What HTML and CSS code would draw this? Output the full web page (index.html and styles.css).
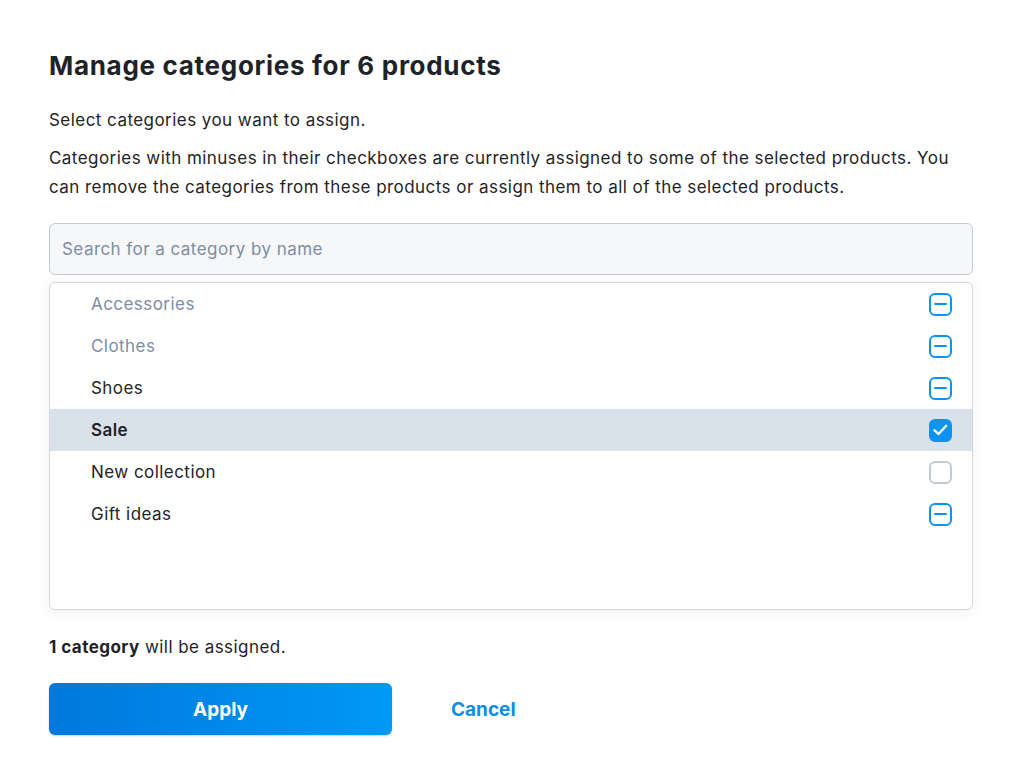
FILE: index.html
```html
<!DOCTYPE html>
<html lang="en">
<head>
  <meta charset="UTF-8" />
  <meta name="viewport" content="width=device-width, initial-scale=1.0"/>
  <title>Manage categories</title>
  <link rel="stylesheet" href="styles.css">
</head>
<body>
  <div class="dialog">
    <h1>Manage categories for 6 products</h1>

    <p>Select categories you want to assign.</p>
    <p>Categories with minuses in their checkboxes are currently assigned to some of the selected products. You can remove the categories from these products or assign them to all of the selected products.</p>

    <input class="search" type="text" placeholder="Search for a category by name">

    <ul class="cat-list">
      <li class="muted"><span>Accessories</span><span class="box partial"></span></li>
      <li class="muted"><span>Clothes</span><span class="box partial"></span></li>
      <li><span>Shoes</span><span class="box partial"></span></li>
      <li class="selected"><span>Sale</span>
        <span class="box checked">
          <svg width="15" height="12" viewBox="0 0 15 12"><path d="M1.6 6.3 L5.5 10 L13.2 1.8" fill="none" stroke="#fff" stroke-width="2.4" stroke-linecap="round" stroke-linejoin="round"/></svg>
        </span>
      </li>
      <li><span>New collection</span><span class="box"></span></li>
      <li><span>Gift ideas</span><span class="box partial"></span></li>
    </ul>

    <p class="summary"><b>1 category</b> will be assigned.</p>

    <div class="actions">
      <button class="apply">Apply</button>
      <button class="cancel">Cancel</button>
    </div>
  </div>
</body>
</html>
```

FILE: styles.css
```css
body {
  margin: 0;
  background-color: #ffffff;
  font-family: Inter, "Open Sans", sans-serif;
  color: #1f2328;
}

.dialog {
  padding: 50px 51px 30px 49px;
}

h1 {
  margin: 0 0 24px;
  font-size: 26px;
  line-height: 32px;
  font-weight: 700;
  letter-spacing: 0.7px;
  color: #1e2329;
}

p {
  margin: 0 0 9px;
  font-size: 17px;
  line-height: 29px;
  letter-spacing: 0.45px;
}

.search {
  display: block;
  box-sizing: border-box;
  width: 100%;
  height: 52px;
  margin-top: 21px;
  padding: 0 12px;
  border: 1px solid #c5cbd3;
  border-radius: 6px;
  background-color: #f6f7f9;
  font-family: inherit;
  font-size: 17px;
  letter-spacing: 0.45px;
  color: #1f2328;
}

.search::placeholder {
  color: #7d8da3;
}

.cat-list {
  list-style: none;
  margin: 7px 0 0;
  padding: 0;
  height: 326px;
  border: 1px solid #d4d9e0;
  border-radius: 6px;
  background: #fff;
  box-shadow: 0 2px 14px rgba(30, 40, 60, 0.07);
  overflow: hidden;
}

.cat-list li {
  display: flex;
  align-items: center;
  justify-content: space-between;
  height: 42px;
  padding: 0 20px 0 41px;
  font-size: 17px;
  letter-spacing: 0.45px;
}

.cat-list li.muted {
  color: #7d8da4;
}

.cat-list li.selected {
  background-color: #d9e1ea;
  font-weight: 600;
}

.box {
  display: flex;
  align-items: center;
  justify-content: center;
  box-sizing: border-box;
  width: 23px;
  height: 23px;
  border: 2px solid #c3c9d1;
  border-radius: 6px;
  background: #fff;
}

.box.partial {
  border-color: #0d93f2;
}

.box.partial::after {
  content: "";
  width: 13px;
  height: 2px;
  border-radius: 1px;
  background: #0d93f2;
}

.box.checked {
  border-color: #0d93f2;
  background: #0d93f2;
}

.summary {
  margin: 23px 0 0;
}

.actions {
  display: flex;
  align-items: center;
  margin-top: 21px;
}

button {
  font-family: inherit;
  font-size: 19px;
  font-weight: 700;
  cursor: pointer;
}

.apply {
  width: 343px;
  height: 52px;
  border: none;
  border-radius: 6px;
  color: #ffffff;
  background: linear-gradient(90deg, #0078dc, #0099f5);
  box-shadow: 0 1px 2px rgba(0, 60, 120, 0.25);
}

.cancel {
  margin-left: 47px;
  padding: 0 12px;
  border: none;
  background: none;
  color: #0a8ee9;
}
```
